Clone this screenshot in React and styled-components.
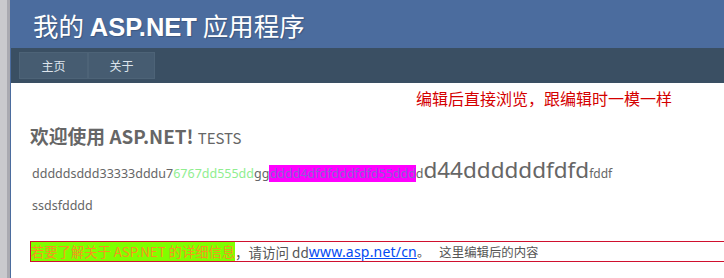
import React from "react"
import styled, { createGlobalStyle } from 'styled-components';

const GlobalStyle = createGlobalStyle`
  html, body {
    margin: 0;
    padding: 0;
    background: #fff;
    overflow: hidden;
  }
  body {
    font-family: "Noto Sans", "Noto Sans CJK SC", sans-serif;
  }
`

const Frame = styled.div`
  display: flex;
  width: 724px;
  height: 278px;
  overflow: hidden;
`

const SideStrip = styled.div`
  width: 7px;
  flex-shrink: 0;
  background: #c9c9cd;
  border-right: 3px solid #a9a9b0;
`

const Page = styled.div`
  flex: 1;
  min-width: 0;
  border-left: 1px solid #4b6c9e;
  background: #fff;
`

const Header = styled.div`
  height: 48px;
  background: #4b6c9e;
  display: flex;
  align-items: center;
  padding-left: 22px;
`

const Title = styled.h1`
  margin: 0;
  font-size: 25.5px;
  font-weight: normal;
  color: #fff;
  font-family: "Noto Sans CJK SC", sans-serif;
  text-shadow: 1px 1px 1px rgba(0,0,0,0.2);
  b {
    font-family: "Liberation Sans", "Noto Sans CJK SC", sans-serif;
    font-weight: bold;
  }
`

const NavBar = styled.div`
  height: 35px;
  background: #3a4f63;
  display: flex;
  align-items: flex-start;
  padding: 4px 0 0 8px;
  box-sizing: border-box;
`

const NavItem = styled.a`
  width: ${props => props.w}px;
  height: 27px;
  box-sizing: border-box;
  background: #465c71;
  border: 1px solid #4d6377;
  color: #dde4ec;
  font-size: 12px;
  font-family: "Noto Sans CJK SC", sans-serif;
  display: flex;
  align-items: center;
  justify-content: center;
  text-decoration: none;
`

const Main = styled.div`
  padding: 4px 0 0 19px;
  color: #666;
  font-family: "Noto Sans", "Noto Sans CJK SC", sans-serif;
  font-size: 12.5px;
`

const RedNote = styled.div`
  margin-left: 386px;
  color: #d40000;
  font-size: 16px;
  line-height: 22px;
  font-family: "Noto Sans CJK SC", sans-serif;
  white-space: nowrap;
`

const Heading = styled.h2`
  margin: 15px 0 0;
  font-size: 18.8px;
  line-height: 24px;
  color: #666;
  font-weight: bold;
  font-family: "Noto Sans CJK SC", sans-serif;
  span {
    font-weight: normal;
    font-size: 15px;
  }
`

const Para = styled.p`
  margin: ${props => props.mt}px 0 0 2px;
  white-space: nowrap;
  line-height: ${props => props.lh || 20}px;
`

const Mark = styled.span`
  color: ${props => props.fg};
  background: ${props => props.bg || 'transparent'};
  font-size: ${props => props.size || 12.5}px;
`

const InfoBox = styled.div`
  margin-top: 25px;
  margin-right: -20px;
  border: 1px solid #d0102e;
  height: 21px;
  box-sizing: border-box;
  display: flex;
  align-items: center;
  white-space: nowrap;
  font-family: "Noto Sans CJK SC", sans-serif;
  font-size: 13.5px;
  color: #555;
`

const Link = styled.a`
  color: #034af3;
  text-decoration: underline;
  font-family: "Noto Sans", sans-serif;
  font-size: 14px;
  letter-spacing: 0.2px;
`

const Tail = styled.span`
  font-size: 12.4px;
  margin-left: ${props => props.gap || 0}px;
`

export default function App() {
  return (
    <>
      <GlobalStyle />
      <Frame>
        <SideStrip />
        <Page>
          <Header>
            <Title>我的 <b>ASP.NET</b> 应用程序</Title>
          </Header>
          <NavBar>
            <NavItem w={69}>主页</NavItem>
            <NavItem w={67}>关于</NavItem>
          </NavBar>
          <Main>
            <RedNote>编辑后直接浏览，跟编辑时一模一样</RedNote>
            <Heading>欢迎使用 ASP.NET! <span>TESTS</span></Heading>
            <Para mt={8} lh={24}>
              dddddsddd33333dddu7<Mark fg="#90ee90">6767dd555dd</Mark>gg<Mark fg="#8a5fd6" bg="#ff00ff">dddd4dfdfdddfdfd55ddd</Mark>d<Mark size={22.5}>d44ddddddfdfd</Mark><Mark size={12}>fddf</Mark>
            </Para>
            <Para mt={10}>ssdsfdddd</Para>
            <InfoBox>
              <Mark fg="#f7941d" bg="#7fff00" size={13.3}>若要了解关于 ASP.NET 的详细信息</Mark>，请访问 dd<Link>www.asp.net/cn</Link><Tail>。</Tail><Tail gap={10}>这里编辑后的内容</Tail>
            </InfoBox>
          </Main>
        </Page>
      </Frame>
    </>
  )
}
